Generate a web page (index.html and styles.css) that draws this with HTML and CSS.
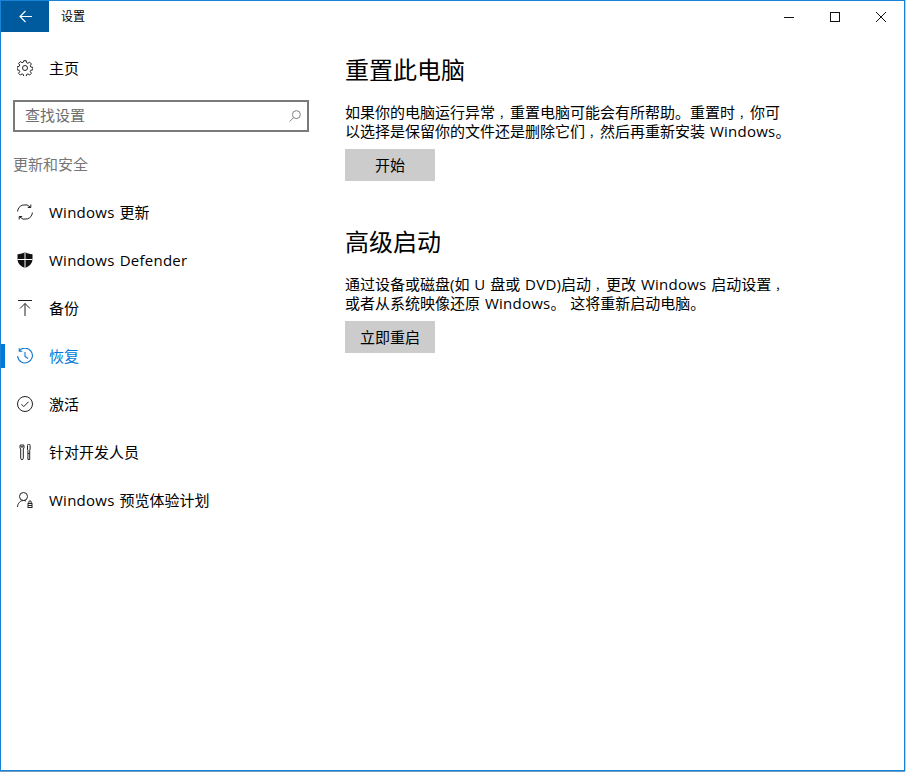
FILE: index.html
```html
<!DOCTYPE html>
<html lang="zh-CN">
<head>
<meta charset="utf-8">
<title>设置</title>
<link rel="stylesheet" href="styles.css">
</head>
<body>
<div class="window">
  <header class="titlebar">
    <div class="back">
      <svg width="13" height="13" viewBox="0 0 13 13" fill="none" stroke="#fff" stroke-width="1.1"><path d="M1 6.500h12M6.500 1L1 6.500 6.500 12"/></svg>
    </div>
    <div class="title">设置</div>
    <div class="controls">
      <div class="ctl"><svg width="12" height="12" viewBox="0 0 12 12"><path d="M1 6.500h10" stroke="#111" fill="none"/></svg></div>
      <div class="ctl"><svg width="12" height="12" viewBox="0 0 12 12"><rect x="1.500" y="1.500" width="9" height="9" stroke="#111" fill="none"/></svg></div>
      <div class="ctl"><svg width="12" height="12" viewBox="0 0 12 12"><path d="M1 1l10 10M11 1L1 11" stroke="#111" fill="none"/></svg></div>
    </div>
  </header>
  <div class="main">
    <aside class="sidebar">
      <div class="home navitem">
        <svg class="icon" viewBox="0 0 16 16" fill="none" stroke="#222" stroke-width="1"><circle cx="8" cy="8" r="2.500"/><path d="M6.800.7h2.400l.4 2 1.300.6 1.800-1.100 1.700 1.700-1.100 1.800.6 1.300 2 .4v2.400l-2 .4-.6 1.300 1.100 1.800-1.700 1.700-1.800-1.100-1.300.6-.4 2H6.800l-.4-2-1.300-.6-1.800 1.100-1.700-1.700 1.100-1.800-.6-1.300-2-.4V6.800l2-.4.6-1.300-1.100-1.800 1.700-1.700 1.800 1.100 1.300-.6z"/></svg>
        <span>主页</span>
      </div>
      <div class="search">
        <span class="placeholder">查找设置</span>
        <svg width="12" height="12" viewBox="0 0 13 13" fill="none" stroke="#777" stroke-width="1"><circle cx="8" cy="5" r="4.300"/><path d="M5 8.200L.6 12.600"/></svg>
      </div>
      <div class="group">更新和安全</div>
      <nav class="nav">
        <div class="navitem">
          <svg class="icon" viewBox="0 0 16 16" fill="none" stroke="#222" stroke-width="1"><path d="M.6 7.500A7.400 7.400 0 0 1 13.500 3.200M15.400 8.500A7.400 7.400 0 0 1 2.500 12.800"/><path d="M13.800.5v3h-3M2.200 15.500v-3h3"/></svg>
          <span><span class="lat">Windows</span> 更新</span>
        </div>
        <div class="navitem">
          <svg class="icon" viewBox="0 0 16 16"><path fill-rule="evenodd" fill="#111" d="M8 0c2 1.400 4.600 2.200 7.500 2.200V7c0 4.200-3 7.400-7.500 9C3.500 14.400.5 11.200.5 7V2.200C3.400 2.200 6 1.400 8 0z"/><path d="M8 0v16M.5 7.500h15" stroke="#fff" stroke-width="1"/></svg>
          <span class="lat">Windows Defender</span>
        </div>
        <div class="navitem">
          <svg class="icon" viewBox="0 0 16 16" fill="none" stroke="#222" stroke-width="1"><path d="M1 .5h14M8 16V3.500M3 8.500l5-5 5 5"/></svg>
          <span>备份</span>
        </div>
        <div class="navitem active">
          <svg class="icon" viewBox="0 0 16 16" fill="none" stroke="#0b78d4" stroke-width="1.100"><path d="M2.300 2.800A7.400 7.400 0 1 1 .6 8"/><path d="M2.300 .3v3h3M8 4v4.500l3 2"/></svg>
          <span>恢复</span>
        </div>
        <div class="navitem">
          <svg class="icon" viewBox="0 0 16 16" fill="none" stroke="#222" stroke-width="1"><circle cx="8" cy="8" r="7.500"/><path d="M4.500 8.300l2.300 2.300 4.700-4.900"/></svg>
          <span>激活</span>
        </div>
        <div class="navitem">
          <svg class="icon" viewBox="0 0 16 16" fill="none" stroke="#222" stroke-width="1"><path d="M4 .5v2.500h2V.5C7.300 1.300 7.500 3.800 6.300 5v9.300a1.300 1.300 0 0 1-2.600 0V5C2.500 3.800 2.700 1.300 4 .5z"/><path d="M10.500 1.500a1.300 1.300 0 0 1 2.600 0V5l-.4 1.500v9h-1.800v-9L10.500 5zM10.900 9.500h1.800"/></svg>
          <span>针对开发人员</span>
        </div>
        <div class="navitem">
          <svg class="icon" viewBox="0 0 16 16" fill="none" stroke="#222" stroke-width="1"><circle cx="6.500" cy="4.500" r="4"/><path d="M.5 15c.2-3.800 2.800-6.500 6-6.500 1 0 1.800.2 2.600.7"/><rect x="11" y="11.500" width="4" height="4"/><path d="M11.800 11.500V10a1.200 1.200 0 0 1 2.400 0v1.500M11 13.500h4"/></svg>
          <span><span class="lat">Windows</span> 预览体验计划</span>
        </div>
      </nav>
    </aside>
    <main class="content">
      <section class="section">
        <h2>重置此电脑</h2>
        <p>如果你的电脑运行异常<span class="cm">，</span>重置电脑可能会有所帮助。重置时<span class="cm">，</span>你可<br>以选择是保留你的文件还是删除它们<span class="cm">，</span>然后再重新安装 <span class="lat">Windows</span>。</p>
        <button class="btn">开始</button>
      </section>
      <section class="section">
        <h2>高级启动</h2>
        <p>通过设备或磁盘(如 U 盘或 <span class="lat">DVD</span>)启动<span class="cm">，</span>更改 <span class="lat">Windows</span> 启动设置<span class="cm">，</span><br>或者从系统映像还原 <span class="lat">Windows</span>。 这将重新启动电脑。</p>
        <button class="btn">立即重启</button>
      </section>
    </main>
  </div>
</div>
</body>
</html>
```
FILE: styles.css
```css
* { box-sizing: border-box; }
html, body { margin: 0; padding: 0; height: 100%; }
body {
  font-family: "Open Sans", "Noto Sans CJK SC", sans-serif;
  font-size: 15px;
  color: #000;
  background: #fff;
  overflow: hidden;
}
.window {
  width: 905px;
  height: 771px;
  border: 1px solid #1883d7;
  box-shadow: 1px 0 0 #b5d5ee, 0 1px 0 #6f9cc2;
  display: flex;
  flex-direction: column;
  background: #fff;
}
.titlebar {
  height: 31px;
  display: flex;
  align-items: center;
  flex: none;
}
.back {
  width: 48px;
  height: 31px;
  background: #005a9e;
  display: flex;
  align-items: center;
  justify-content: center;
}
.title {
  margin-left: 12px;
  padding-bottom: 2px;
  font-size: 12px;
  flex: 1;
}
.controls { display: flex; }
.ctl {
  width: 46px;
  height: 31px;
  display: flex;
  align-items: center;
  justify-content: center;
}
.main { flex: 1; display: flex; }
.sidebar { width: 344px; flex: none; }
.navitem {
  height: 48px;
  display: flex;
  align-items: center;
  padding-left: 16px;
  gap: 16px;
  position: relative;
  line-height: 20px;
  word-spacing: 1px;
}
.icon { width: 16px; height: 16px; flex: none; }
.home { margin-top: 12px; }
.search {
  margin: 8px 0 0 12px;
  width: 296px;
  height: 32px;
  border: 2px solid #7a7a7a;
  display: flex;
  align-items: center;
  justify-content: space-between;
  padding: 0 6px 0 10px;
}
.placeholder { color: #6d6d6d; padding-bottom: 3px; }
.group {
  margin: 18px 0 0 12px;
  height: 38px;
  line-height: 28px;
  color: #767676;
}
.lat { letter-spacing: .25px; }
.cm { font-size: 11px; line-height: 0; padding-left: 4px; }
.active { color: #0078d7; }
.active::before {
  content: "";
  position: absolute;
  left: 0;
  top: 12px;
  width: 4px;
  height: 24px;
  background: #0078d7;
}
.content { flex: 1; }
.section { height: 172px; padding-top: 21px; }
h2 {
  margin: 0;
  font-size: 24px;
  font-weight: 400;
  line-height: 34px;
  height: 34px;
}
p {
  margin: 16px 0 0;
  line-height: 19px;
  word-spacing: 1px;
}
.btn {
  display: block;
  margin-top: 8px;
  width: 90px;
  height: 32px;
  border: 0;
  padding: 0 0 2px;
  background: #cccccc;
  color: #000;
  font: inherit;
}
```
